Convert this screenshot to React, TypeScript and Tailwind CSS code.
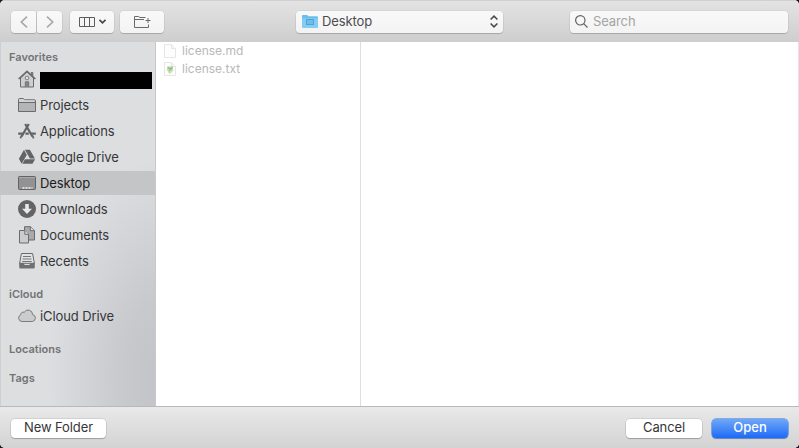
import type { ReactNode } from "react";

const HomeIcon = () => (
  <svg width="18" height="18" viewBox="0 0 18 18" fill="none" stroke="#6b6b6d">
    <path d="M13.2 5V2.500h1.600v4" fill="#8b8b8d" />
    <path d="M2.500 8v9h13V8L9 2z" fill="#cdced0" />
    <path d="M.6 9 9 1.200 17.400 9" strokeWidth="1.500" />
    <circle cx="9" cy="8" r="1.800" fill="#e4e4e6" strokeWidth=".8" />
    <path d="M7.300 17v-5.200h3.400V17" fill="#858587" strokeWidth=".8" />
  </svg>
);

const FolderIcon = () => (
  <svg width="18" height="18" viewBox="0 0 18 18" stroke="#6b6b6d">
    <path d="M.5 15.500v-12q0-1 1-1h3.600l1.500 1.300h9.900q1 0 1 1v10.700z" fill="#b4b5b7" />
    <path d="M1 3.500q0-.5.5-.5H5l1.500 1.300h10V6H1z" fill="#d3d4d6" stroke="none" />
    <path d="M.5 6.500h17" />
  </svg>
);

const AppsIcon = () => (
  <svg width="18" height="18" viewBox="0 0 18 18" fill="none" stroke="#646467">
    <path d="M10.800 2 3.600 14.500M7.200 2l7.200 12.500" strokeWidth="2.200" />
    <path d="M.2 11.700h5M7.400 11.700h3.400M12.800 11.700h5" strokeWidth="2.200" />
    <path d="m3.400 13.800-1 2.600M14.600 13.800l1 2.600" strokeWidth="1.700" />
  </svg>
);

const DriveIcon = () => (
  <svg width="18" height="18" viewBox="0 0 18 18" fill="#646467">
    <path d="M6 1.700.9 10.800l2.700 5L8.800 6.900zM6.900 1.700h5l5 8.700h-5zM6.900 11.300h10.200l-2.600 4.500H4.400z" />
  </svg>
);

const DesktopIcon = () => (
  <svg width="18" height="18" viewBox="0 0 18 18">
    <rect x=".5" y="2.500" width="17" height="13" rx=".8" fill="#929294" stroke="#626264" />
    <path d="M1 3.500h16" stroke="#a9a9ab" />
    <path d="M4.500 14h2m1 0h2m1 0h2m1 0h1" stroke="#dcdcde" strokeWidth="2" />
  </svg>
);

const DownloadIcon = () => (
  <svg width="18" height="18" viewBox="0 0 18 18">
    <circle cx="9" cy="9" r="9" fill="#646467" />
    <path d="M7.200 4h3.600v4.800h3.200L9 14 4 8.800h3.200z" fill="#e8e8ea" />
  </svg>
);

const DocsIcon = () => (
  <svg width="18" height="18" viewBox="0 0 18 18" fill="#a9aaac" stroke="#6b6b6d">
    <path d="M6.500.7h6l4 4v9.300h-10z" />
    <path d="M12.300.7v4h4.200" fill="#dddee0" />
    <path d="M1.500 4.500h5.300l3.700 3.800v8.700h-9z" fill="#cbccce" />
    <path d="M6.800 4.500v3.800h3.700" fill="#e2e3e5" />
  </svg>
);

const RecentsIcon = () => (
  <svg width="18" height="18" viewBox="0 0 18 18">
    <path d="M3.400 1.500h11.200l1.800 9.800H1.600z" fill="#e2e3e5" stroke="#6b6b6d" />
    <path d="M5 4.500h8M4.500 7h9M4.200 9.500h9.600" stroke="#77777a" />
    <path d="M1.200 11h4.300l1.200 2h4.600l1.200-2h4.300v4.300q0 1.200-1.200 1.200H2.400q-1.200 0-1.200-1.200z" fill="#707073" />
  </svg>
);

const CloudIcon = () => (
  <svg width="18" height="18" viewBox="0 0 18 18">
    <path
      d="M4 14.500a3.500 3.500 0 0 1-1.300-6.700 2.500 2.500 0 0 1 3.500-2.500 4.500 4.500 0 0 1 8.400 2.300 3.500 3.500 0 0 1-.4 6.900z"
      fill="#cbccce"
      stroke="#7b7b7e"
    />
  </svg>
);

function PageIcon({ picture = false }: { picture?: boolean }) {
  return (
    <svg width="12" height="16" viewBox="0 0 12 16" className="shrink-0">
      <path d="M.5 1.500h7l4 4v9H.5z" fill="#fdfdfd" stroke="#e6e6e6" />
      <path d="M7.500 1.500v4h4" fill="#f5f5f5" stroke="#e6e6e6" />
      {picture && (
        <>
          <path d="M3 5.500 8.800 5l.4 4.200-2.600 3.300H5L3 9z" fill="#c5dfb1" />
          <path d="m3.800 6.500 3 1.600 1.400-2M6.800 8.300 5 9.500" stroke="#93b97e" strokeWidth="1.200" fill="none" />
        </>
      )}
    </svg>
  );
}

function SideItem({ icon, children, active = false }: { icon: ReactNode; children: ReactNode; active?: boolean }) {
  return (
    <div className={`flex h-6 items-center pl-[18px] ${active ? "bg-[#c4c5c7] text-[#1c1c1c]" : ""}`}>
      {icon}
      <span className="ml-1 pt-[2px] tracking-[-0.1px]">{children}</span>
    </div>
  );
}

function SideHeading({ children }: { children: ReactNode }) {
  return <h2 className="h-[14px] pl-[9px] text-[11px] leading-[14px] font-semibold text-[#737376]">{children}</h2>;
}

const toolButton =
  "flex h-[22px] items-center justify-center rounded-[4px] bg-linear-to-b from-[#f9f9f9] to-[#f3f3f3] shadow-[0_0_0_0.5px_rgba(0,0,0,0.08),0_1px_1px_rgba(0,0,0,0.18)]";
const footButton =
  "h-[19px] rounded-[4px] bg-white text-center leading-[17px] pb-[2px] tracking-[-0.1px] shadow-[0_0_0_0.5px_rgba(0,0,0,0.15),0_1px_1px_rgba(0,0,0,0.2)]";

export default function App() {
  return (
    <div className="h-[448px] w-[799px] overflow-hidden bg-[#17171f] font-['Inter',sans-serif] text-[13px] text-[#363638]">
      <div className="flex h-full flex-col overflow-hidden rounded-[5px] bg-white">
        <header className="flex h-[42px] shrink-0 items-center border-t border-[#d0d0d0] bg-linear-to-b from-[#e3e3e3] to-[#cecece] pr-[11px] pl-[11px]">
          <button className={`${toolButton} w-[25px] rounded-r-[2px]`}>
            <svg width="8" height="12" viewBox="0 0 8 12" fill="none" stroke="#a9a9a9" strokeWidth="1.700">
              <path d="M7 .7 1.300 6 7 11.300" />
            </svg>
          </button>
          <button className={`${toolButton} ml-px w-[25px] rounded-l-[2px]`}>
            <svg width="8" height="12" viewBox="0 0 8 12" fill="none" stroke="#a9a9a9" strokeWidth="1.700">
              <path d="M1 .7 6.700 6 1 11.300" />
            </svg>
          </button>
          <button className={`${toolButton} ml-2 w-11 gap-1`}>
            <svg width="16" height="10" viewBox="0 0 16 10" fill="none" stroke="#5c5c5c">
              <path d="M.5.5h15v9H.5zM5.500.5v9M10.500.5v9" />
            </svg>
            <svg width="7" height="5" viewBox="0 0 7 5" fill="none" stroke="#444" strokeWidth="1.600">
              <path d="m.5.8 3 3 3-3" />
            </svg>
          </button>
          <button className={`${toolButton} ml-[6px] w-11`}>
            <svg width="18" height="14" viewBox="0 0 18 14" fill="none" stroke="#6a6a6a">
              <path d="M15.500 9.500v3H1.500v-11h4L7 2.500h5.500M1.500 4.500H11M12.500 5.500h5M15 3v5" />
            </svg>
          </button>
          <button className={`${toolButton} ml-[132px] w-[207px] !justify-start pr-[5px] pl-[6px] text-[#4c4c4e]`}>
            <svg width="16" height="13" viewBox="0 0 16 13">
              <path d="M0 12V1q0-1 1-1h4l1.500 1.200H15q1 0 1 1V12q0 .8-1 .8H1Q0 12.800 0 12z" fill="#6dbdeb" />
              <path d="M0 3.200h16V12q0 .8-1 .8H1Q0 12.800 0 12z" fill="#83ccf4" />
              <rect x="4.500" y="4.500" width="7" height="5" fill="#72bce8" stroke="#50a4d8" />
            </svg>
            <span className="ml-1 flex-1 text-left tracking-[-0.1px]">Desktop</span>
            <svg width="8" height="13" viewBox="0 0 8 13" fill="none" stroke="#484848" strokeWidth="1.500">
              <path d="m.6 4.500 3.400-3.400 3.400 3.400M.6 8.500l3.400 3.400 3.400-3.400" />
            </svg>
          </button>
          <div className={`${toolButton} ml-auto w-[218px] !justify-start pl-[5px] text-[#a4a4a4]`}>
            <svg width="13" height="13" viewBox="0 0 13 13" fill="none" stroke="#626262" strokeWidth="1.200">
              <circle cx="5.300" cy="5.300" r="4.700" />
              <path d="m8.700 8.700 3.800 3.800" />
            </svg>
            <span className="ml-[5px] tracking-[-0.1px]">Search</span>
          </div>
        </header>

        <main className="flex h-[364px] shrink-0">
          <aside className="w-[156px] shrink-0 border-r border-l border-r-[#c8c8cb] border-l-[#cecfd1] bg-[radial-gradient(ellipse_115px_220px_at_105%_92%,#c2c3c8_0%,#c8c9cd_35%,#dddee0_100%)]">
            <div className="-ml-px pt-2">
              <SideHeading>Favorites</SideHeading>
              <nav className="mt-[3px] flex flex-col gap-[2px]">
                <SideItem icon={<HomeIcon />}>
                  <span className="block h-[17px] w-[112px] bg-black" />
                </SideItem>
                <SideItem icon={<FolderIcon />}>Projects</SideItem>
                <SideItem icon={<AppsIcon />}>Applications</SideItem>
                <SideItem icon={<DriveIcon />}>Google Drive</SideItem>
                <SideItem icon={<DesktopIcon />} active>
                  Desktop
                </SideItem>
                <SideItem icon={<DownloadIcon />}>Downloads</SideItem>
                <SideItem icon={<DocsIcon />}>Documents</SideItem>
                <SideItem icon={<RecentsIcon />}>Recents</SideItem>
              </nav>
              <div className="mt-[14px]">
                <SideHeading>iCloud</SideHeading>
              </div>
              <div className="mt-[3px]">
                <SideItem icon={<CloudIcon />}>iCloud Drive</SideItem>
              </div>
              <div className="mt-[14px] flex flex-col gap-[15px]">
                <SideHeading>Locations</SideHeading>
                <SideHeading>Tags</SideHeading>
              </div>
            </div>
          </aside>
          <section className="w-[205px] shrink-0 border-r border-[#dedede] text-[12px] text-[#b8b8b8]">
            <div className="flex h-[18px] items-center gap-[6px] pl-2">
              <PageIcon />
              <span>license.md</span>
            </div>
            <div className="flex h-[18px] items-center gap-[6px] pl-2">
              <PageIcon picture />
              <span>license.txt</span>
            </div>
          </section>
          <section className="flex-1 border-r border-[#e5e5e5]" />
        </main>

        <footer className="flex h-[42px] items-center border-t border-[#b9b9b9] bg-linear-to-b from-[#e9e9e9] to-[#d3d3d3] px-[11px] pt-px">
          <button className={`${footButton} w-[95px]`}>New Folder</button>
          <button className={`${footButton} ml-auto w-[76px]`}>Cancel</button>
          <button className="ml-[10px] h-[19px] w-[76px] rounded-[4px] bg-linear-to-b from-[#6ea7f8] to-[#1c69f5] pb-[2px] text-center leading-[17px] font-medium text-white shadow-[0_0_0_0.5px_#2d70e0,0_1px_1px_rgba(0,0,0,0.25)]">
            Open
          </button>
        </footer>
      </div>
    </div>
  );
}
